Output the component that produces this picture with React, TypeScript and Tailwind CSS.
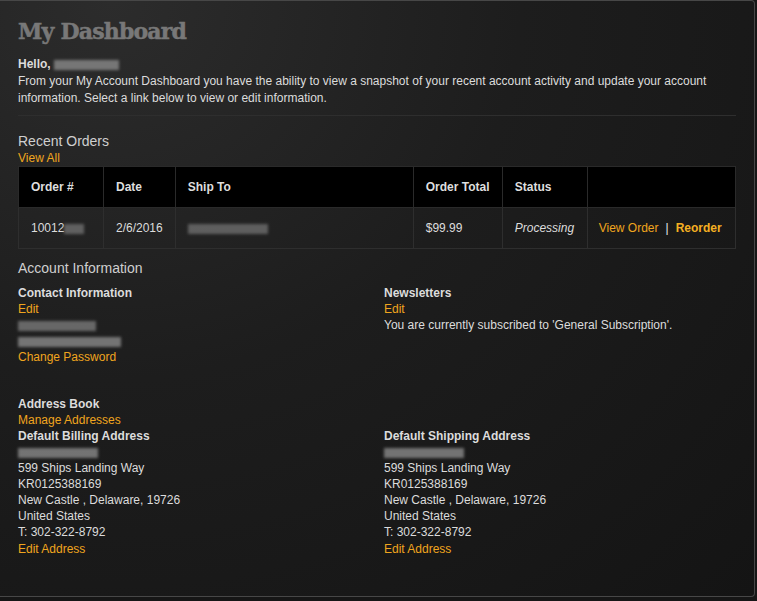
import React from "react";

const link = "text-[#f0a51e] hover:underline cursor-pointer";

function Blur({ w, tone = "#8a8a8a" }: { w: number; tone?: string }) {
  // blurred (redacted) text placeholder
  return (
    <span
      className="inline-block h-[10px] align-middle blur-[1.5px] opacity-80"
      style={{ width: w, backgroundColor: tone }}
    />
  );
}

function Address({ title, name }: { title: string; name: number }) {
  return (
    <div>
      <p className="font-bold">{title}</p>
      <p className="h-4">
        <Blur w={name} />
      </p>
      <p>599 Ships Landing Way</p>
      <p>KR0125388169</p>
      <p>New Castle , Delaware, 19726</p>
      <p>United States</p>
      <p>T: 302-322-8792</p>
      <a className={`${link} mt-px block`}>Edit Address</a>
    </div>
  );
}

export default function App() {
  const cols = [
    { label: "Order #", w: 85 },
    { label: "Date", w: 71 },
    { label: "Ship To", w: 238 },
    { label: "Order Total", w: 89 },
    { label: "Status", w: 85 },
    { label: "", w: 148 },
  ];

  return (
    <div className="h-[601px] w-[757px] bg-[#161616] font-['Liberation_Sans',Arial,sans-serif] text-[12px] leading-4 text-[#dcdcdc]">
      <div className="h-[597px] w-[755px] rounded-br-[4px] rounded-tr-[4px] border-r border-b border-t border-[#474747] bg-[radial-gradient(ellipse_at_15%_0%,#2c2c2c_0%,#1d1d1d_45%,#141414_100%)] px-[18px] pt-[14px]">
        <h1 className="font-['DejaVu_Serif',serif] text-[22px] font-black leading-8 tracking-[-0.8px] text-[#787878] [-webkit-text-stroke:0.5px_#787878]">
          My Dashboard
        </h1>
        <div className="mt-[9px] leading-[17px]">
          <p className="font-bold">
            Hello, <Blur w={65} />
          </p>
          <p>
            From your My Account Dashboard you have the ability to view a
            snapshot of your recent account activity and update your account
            information. Select a link below to view or edit information.
          </p>
        </div>
        <div className="mt-[8px] h-px bg-[#2e2e2e]" />

        <h2 className="mt-[16px] text-[14px] leading-[18px] text-[#cfcfcf]">
          Recent Orders
        </h2>
        <a className={link}>View All</a>
        <table className="table-fixed border-collapse">
          <colgroup>
            {cols.map((c, i) => (
              <col key={i} style={{ width: c.w }} />
            ))}
          </colgroup>
          <thead>
            <tr className="h-[41px] bg-black text-left">
              {cols.map((c, i) => (
                <th
                  key={i}
                  className="border border-[#2a2a2a] px-[12px] font-bold text-[#dedede]"
                >
                  {c.label}
                </th>
              ))}
            </tr>
          </thead>
          <tbody>
            <tr className="h-[41px]">
              <td className="border border-[#2e2e2e] px-[12px]">
                10012
                <Blur w={20} tone="#707070" />
              </td>
              <td className="border border-[#2e2e2e] px-[12px]">2/6/2016</td>
              <td className="border border-[#2e2e2e] px-[12px]">
                <Blur w={80} tone="#6e6e6e" />
              </td>
              <td className="border border-[#2e2e2e] px-[12px]">$99.99</td>
              <td className="border border-[#2e2e2e] px-[12px] italic">
                Processing
              </td>
              <td className="border border-[#2e2e2e] px-[11px]">
                <a className={link}>View Order</a>
                <span className="mx-[7px] text-[#e6e6e6]">|</span>
                <a className={`${link} font-bold text-[#f5b022]`}>Reorder</a>
              </td>
            </tr>
          </tbody>
        </table>

        <h2 className="mt-[10px] text-[14px] leading-[18px] text-[#cfcfcf]">
          Account Information
        </h2>
        <div className="mt-[8px] grid grid-cols-2 gap-x-[14px]">
          <div>
            <p className="font-bold">Contact Information</p>
            <a className={link}>Edit</a>
            <p className="h-4">
              <Blur w={78} tone="#7a7a7a" />
            </p>
            <p className="h-4">
              <Blur w={103} tone="#8a8a8a" />
            </p>
            <a className={link}>Change Password</a>
          </div>
          <div>
            <p className="font-bold">Newsletters</p>
            <a className={link}>Edit</a>
            <p>You are currently subscribed to 'General Subscription'.</p>
          </div>
        </div>

        <div className="mt-[31px]">
          <p className="font-bold">Address Book</p>
          <a className={link}>Manage Addresses</a>
        </div>
        <div className="grid grid-cols-2 gap-x-[14px]">
          <Address title="Default Billing Address" name={80} />
          <Address title="Default Shipping Address" name={80} />
        </div>
      </div>
    </div>
  );
}
